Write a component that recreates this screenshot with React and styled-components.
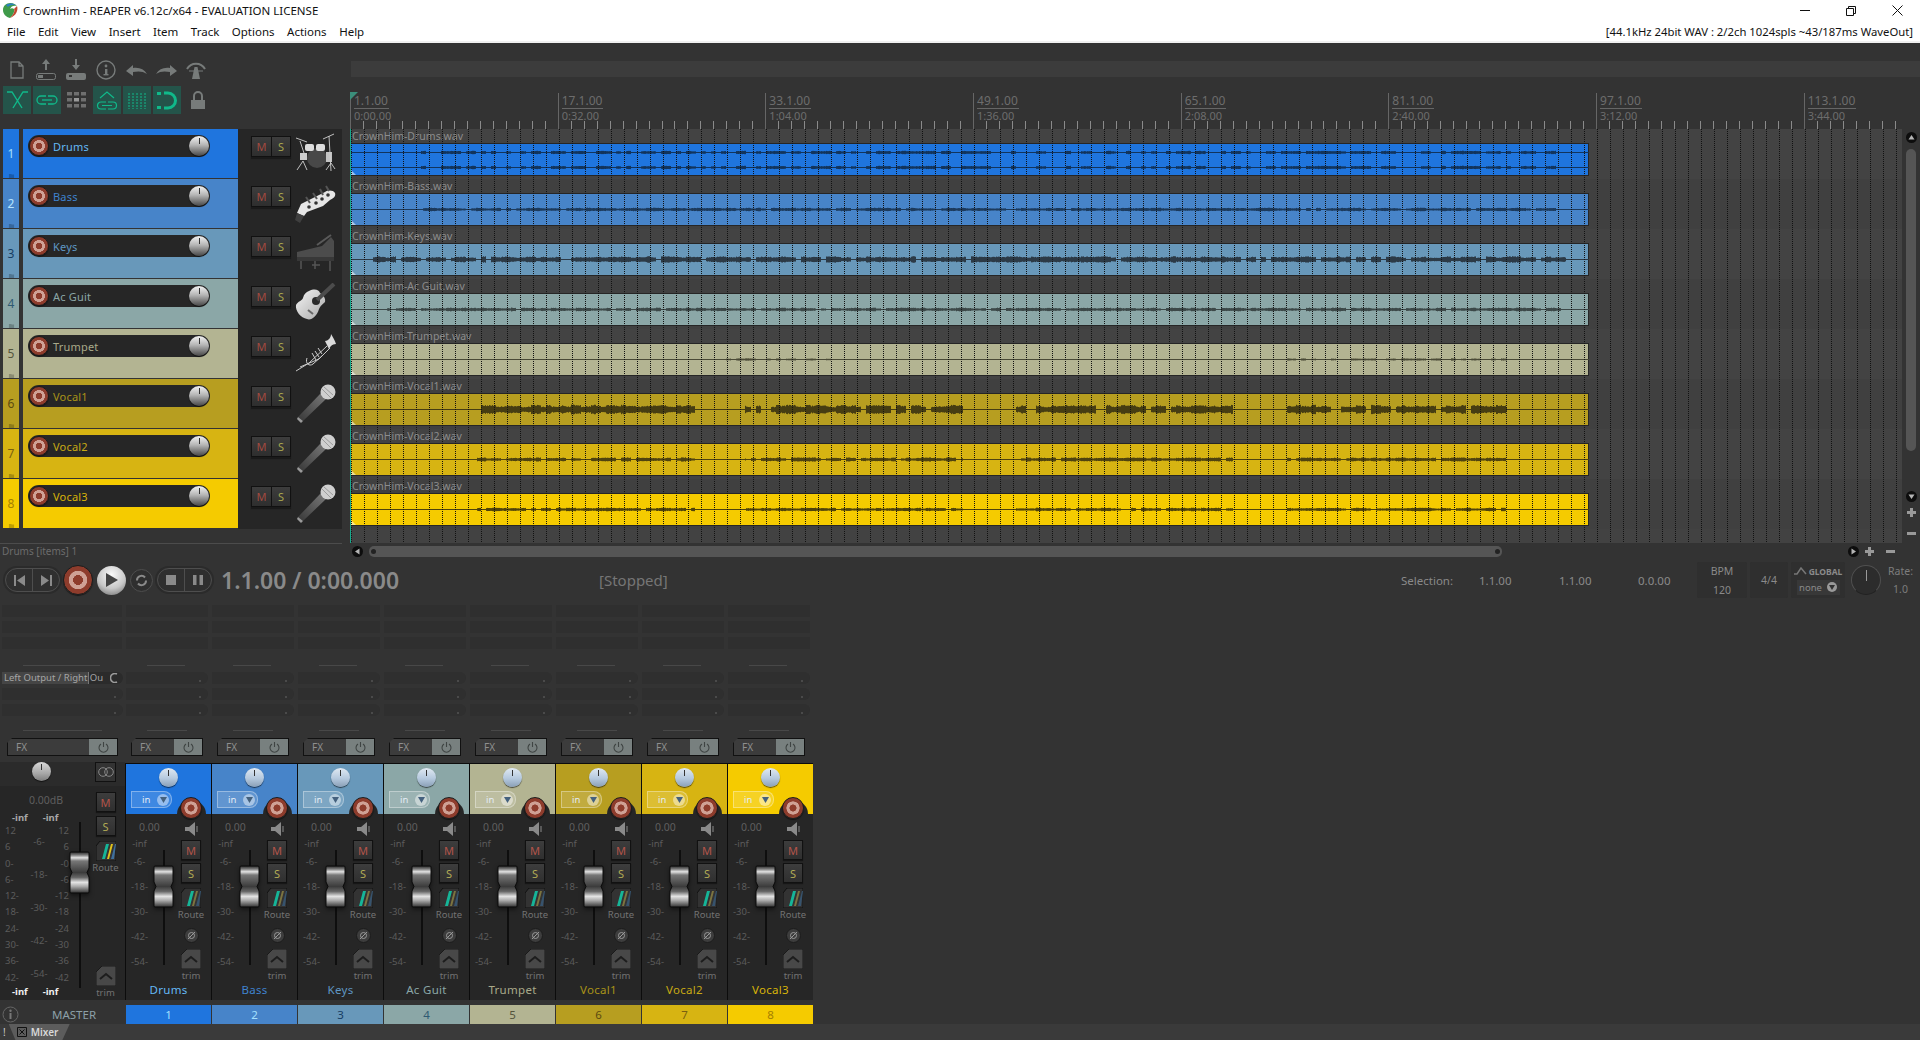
import React from 'react';
import styled, { createGlobalStyle } from 'styled-components';

const GlobalStyle = createGlobalStyle`
  html, body { margin: 0; padding: 0; background: #333; }
  body { font-family: "Noto Sans", "Open Sans", sans-serif; overflow: hidden; }
  * { box-sizing: border-box; }
`;

const STEP = 12.98;
const VOCAL_SEGS = [[126, 344], [394, 612], [665, 882], [936, 1156]];

const TRACKS = [
  { n: 1, name: 'Drums', color: '#1f75de', label: '#64b9f5', num: '#a5e0ff', wave: '#12345c', amp: 1.8, sparse: true, stereo: true, from: 70, to: 1205, icon: 'drums' },
  { n: 2, name: 'Bass', color: '#4784c9', label: '#3f83cf', num: '#b5e3ff', wave: '#1c3a5c', amp: 1.9, from: 72, to: 1205, icon: 'bass' },
  { n: 3, name: 'Keys', color: '#6898ba', label: '#5f97c4', num: '#173d63', wave: '#2c3a46', amp: 3.4, from: 22, to: 1215, icon: 'piano' },
  { n: 4, name: 'Ac Guit', color: '#8ba7a7', label: '#8ba7a7', num: '#2f5a72', wave: '#3c4848', amp: 2, from: 36, to: 1210, icon: 'guitar' },
  { n: 5, name: 'Trumpet', color: '#b3b492', label: '#a9aa8a', num: '#55553c', wave: '#4a4a36', amp: 1.2, sparse: true, segs: [[366, 480], [936, 1156]], icon: 'trumpet' },
  { n: 6, name: 'Vocal1', color: '#b79e20', label: '#a89318', num: '#5c4a10', wave: '#463d12', amp: 5, segs: VOCAL_SEGS, icon: 'mic' },
  { n: 7, name: 'Vocal2', color: '#d7b412', label: '#c8aa14', num: '#7a5f10', wave: '#4f430f', amp: 2.2, segs: VOCAL_SEGS, icon: 'mic' },
  { n: 8, name: 'Vocal3', color: '#f5cb00', label: '#d8b408', num: '#a57f00', wave: '#4f430a', amp: 1.9, segs: VOCAL_SEGS, icon: 'mic' },
];

const MENUS = ['File', 'Edit', 'View', 'Insert', 'Item', 'Track', 'Options', 'Actions', 'Help'];
const RULER = [
  ['1.1.00', '0:00.00'], ['17.1.00', '0:32.00'], ['33.1.00', '1:04.00'], ['49.1.00', '1:36.00'],
  ['65.1.00', '2:08.00'], ['81.1.00', '2:40.00'], ['97.1.00', '3:12.00'], ['113.1.00', '3:44.00'],
];

// pseudo random so the wave form stays the same on each render
const noise = (i, seed) => {
  const s = Math.sin(i * 12.9898 + seed * 78.233) * 43758.5453;
  return s - Math.floor(s);
};

const wavePath = (t, center) => {
  const segs = t.segs || [[t.from, t.to]];
  let d = '';
  segs.forEach(([a, b]) => {
    for (let x = a; x < b; x++) {
      const burst = noise(Math.floor(x / 5), t.n);
      const fine = noise(x, t.n + 3);
      const gate = t.sparse ? burst > 0.45 : burst > 0.1;
      const h = gate ? t.amp * (0.5 + 0.5 * burst) * (0.75 + 0.25 * fine) : 0.5;
      d += `M${x + 0.5} ${(center - h).toFixed(1)}V${(center + h).toFixed(1)}`;
    }
  });
  return d;
};

const Page = styled.div`
  width: 1920px;
  height: 1040px;
  display: flex;
  flex-direction: column;
  background: #333;
  overflow: hidden;
`;

const TitleBar = styled.div`
  height: 21px;
  background: #fff;
  display: flex;
  align-items: center;
  padding-left: 2px;
  font-size: 11.5px;
  color: #111;
`;
const TitleText = styled.span`
  margin-left: 4px;
  flex: 1;
`;
const WinButtons = styled.div`
  display: flex;
  align-items: center;
  height: 21px;
`;
const WinButton = styled.span`
  width: 46px;
  height: 21px;
  display: flex;
  align-items: center;
  justify-content: center;
`;
const MenuBar = styled.div`
  height: 22px;
  background: #fff;
  border-bottom: 2px solid #f0f0f0;
  display: flex;
  align-items: center;
  padding: 0 7px;
  font-size: 11.5px;
  color: #111;
  gap: 12.5px;
`;
const AudioInfo = styled.span`
  margin-left: auto;
  font-size: 11.3px;
`;

const Upper = styled.div`
  display: flex;
  height: 517px;
`;
const LeftCol = styled.div`
  width: 350px;
  flex: none;
`;
const Toolbar = styled.div`
  height: 86px;
  padding: 13px 0 0 3px;
`;
const ToolRow = styled.div`
  display: flex;
  align-items: center;
  height: 28px;
  margin-bottom: ${p => p.$mb || 0}px;
`;
const ToolCell = styled.span`
  width: ${p => p.$w || 30}px;
  height: 28px;
  flex: none;
  display: flex;
  align-items: center;
  justify-content: center;
`;
const ToggleCell = styled(ToolCell)`
  background: ${p => (p.$on ? '#24544a' : 'transparent')};
  width: 28px;
  margin-right: 2px;
`;

const TcpRow = styled.div`
  display: flex;
  height: 50px;
  padding-left: 3px;
`;
const TrackNum = styled.div`
  width: 16px;
  height: 49px;
  margin-right: 4px;
  background: ${p => p.$color};
  color: ${p => p.$text};
  font-size: 12px;
  display: flex;
  flex-direction: column;
  align-items: center;
  padding-top: 16px;
`;
const TrackPanel = styled.div`
  width: 215px;
  height: 49px;
  background: ${p => p.$color};
  padding: 6px 0 0 5px;
`;
const TrackPill = styled.div`
  width: 182px;
  height: 22px;
  border-radius: 11px;
  background: #262626;
  display: flex;
  align-items: center;
  padding: 0 1px;
`;
const TrackName = styled.span`
  color: ${p => p.$color};
  font-size: 11px;
  letter-spacing: 0.2px;
  margin-left: 4px;
  flex: 1;
`;
const RecButton = styled.span`
  display: block;
  flex: none;
  width: ${p => p.$size || 20}px;
  height: ${p => p.$size || 20}px;
  border-radius: 50%;
  border: 1px solid #1c1c1c;
  background: radial-gradient(circle, #8e3c2c 0 24%, #cfa195 26% 45%, #8e3c2c 48% 100%);
  box-shadow: 0 1px 1px rgba(0, 0, 0, 0.5);
`;
const Knob = styled.span`
  display: block;
  flex: none;
  position: relative;
  width: ${p => p.$size || 20}px;
  height: ${p => p.$size || 20}px;
  border-radius: 50%;
  background: ${p => p.$bg || 'linear-gradient(#f2f2f2, #b5b5b5 45%, #484848)'};
  box-shadow: 0 1px 1px rgba(0, 0, 0, 0.6);
  &::after {
    content: '';
    position: absolute;
    left: 50%;
    top: 2px;
    width: 1px;
    height: 6px;
    margin-left: -0.5px;
    background: #333;
  }
`;
const TcpRight = styled.div`
  width: 104px;
  background: #262626;
  display: flex;
  align-items: flex-start;
  padding: 7px 0 0 13px;
`;
const MsGroup = styled.div`
  display: flex;
  border: 1px solid #111;
  box-shadow: 0 2px 1px rgba(0, 0, 0, 0.3);
  margin-right: 4px;
  flex: none;
`;
const MsButton = styled.span`
  width: 19px;
  height: 19px;
  background: linear-gradient(#3d3d3d, #2e2e2e);
  border-left: ${p => (p.$s ? '1px solid #111' : 'none')};
  color: ${p => (p.$s ? '#a8a64e' : '#a24a40')};
  font-size: 11px;
  display: flex;
  align-items: center;
  justify-content: center;
`;
const InstrumentBox = styled.span`
  width: 42px;
  height: 40px;
  margin-top: -3px;
  flex: none;
`;
const StatusLine = styled.div`
  width: 342px;
  height: 15px;
  margin-top: 14px;
  border-top: 1px solid #4c4c4c;
  font-size: 10px;
  line-height: 14px;
  color: #6c6c6c;
  padding-left: 2px;
`;

const RightCol = styled.div`
  width: 1570px;
  display: flex;
  flex-direction: column;
  padding-top: 18px;
`;
const MarkerStrip = styled.div`
  height: 16px;
  margin-left: 1px;
  width: 1569px;
  background: #3c3c3c;
`;
const Ruler = styled.div`
  height: 39px;
  margin-top: 13px;
  display: flex;
  background: repeating-linear-gradient(to right, #8a8a8a 0 1px, transparent 1px ${STEP}px) left bottom / 100% 8px no-repeat;
  overflow: hidden;
  width: 1552px;
`;
const RulerCell = styled.div`
  width: ${STEP * 16}px;
  flex: none;
  height: 36px;
  margin-top: 3px;
  border-left: 1px solid #666;
  padding: 1px 0 0 3px;
  color: #6d6d6d;
`;
const RulerBar = styled.div`
  width: fit-content;
  font-size: 12px;
  line-height: 14px;
  padding-right: 1px;
  border-bottom: 1px solid #666;
`;
const RulerTime = styled.div`
  font-size: 11px;
  line-height: 13px;
`;
const ArrangeRow = styled.div`
  display: flex;
  height: 414px;
`;
const Arrange = styled.div`
  position: relative;
  width: 1552px;
  height: 414px;
  background: #424242;
  border-left: 1px solid #17a88c;
  overflow: hidden;
`;
const Lane = styled.div`
  height: 50px;
  padding-top: 14px;
  position: relative;
  background: ${p => (p.$alt ? '#404040' : '#434343')};
`;
const ItemLabel = styled.span`
  position: absolute;
  left: 1px;
  top: 1px;
  font-size: 10.5px;
  line-height: 12px;
  color: #8c8c8c;
`;
const Item = styled.div`
  width: 1238px;
  height: 33px;
  position: relative;
  background: ${p => p.$color};
  border: 1px solid #262626;
  border-left: none;
  &::after {
    content: '';
    position: absolute;
    left: 0;
    bottom: 0;
    border-left: 5px solid rgba(255, 255, 255, 0.55);
    border-top: 5px solid transparent;
  }
`;
const WaveSvg = styled.svg`
  display: block;
`;
const GridSvg = styled.svg`
  position: absolute;
  left: 0;
  top: 0;
  pointer-events: none;
`;
const PlayFlag = styled.span`
  position: absolute;
  left: 350px;
  top: 92px;
  border-top: 8px solid #3b8f7b;
  border-right: 8px solid transparent;
`;
const VScroll = styled.div`
  width: 18px;
  display: flex;
  flex-direction: column;
  align-items: center;
  padding-top: 3px;
`;
const RoundArrow = styled.span`
  width: 11px;
  height: 11px;
  flex: none;
  border-radius: 50%;
  background: #0d0d0d;
  display: flex;
  align-items: center;
  justify-content: center;
`;
const VThumb = styled.div`
  width: 10px;
  height: 302px;
  flex: none;
  margin: 6px 0 40px;
  background: #555;
  border-radius: 5px;
`;
const PlusMinus = styled.svg`
  display: block;
  flex: none;
  margin-top: ${p => p.$mt || 0}px;
  margin-left: ${p => p.$ml || 0}px;
`;
const HScroll = styled.div`
  height: 17px;
  display: flex;
  align-items: center;
  padding-left: 2px;
`;
const HThumb = styled.div`
  width: 1133px;
  height: 11px;
  flex: none;
  margin: 0 346px 0 6px;
  background: #555;
  border-radius: 5px;
  position: relative;
  &::before, &::after {
    content: '';
    position: absolute;
    top: 3px;
    width: 5px;
    height: 5px;
    border-radius: 50%;
    background: #222;
  }
  &::before { left: 2px; }
  &::after { right: 2px; }
`;

const Transport = styled.div`
  height: 40px;
  display: flex;
  align-items: center;
  padding-left: 5px;
  color: #7d7d7d;
`;
const PillGroup = styled.div`
  width: 55px;
  height: 24px;
  flex: none;
  border: 1px solid #4e4e4e;
  border-radius: 12px;
  background: #2f2f2f;
  display: flex;
  box-shadow: 0 0 0 2px #2b2b2b;
`;
const PillPart = styled.span`
  flex: 1;
  display: flex;
  align-items: center;
  justify-content: center;
  border-left: ${p => (p.$line ? '1px solid #4e4e4e' : 'none')};
`;
const BigRec = styled(RecButton)`
  margin: 0 4px 0 3px;
`;
const PlayBall = styled.span`
  width: 29px;
  height: 29px;
  flex: none;
  border-radius: 50%;
  background: radial-gradient(circle at 50% 30%, #fafafa, #c8c8c8 55%, #666);
  display: flex;
  align-items: center;
  justify-content: center;
  margin-right: 4px;
`;
const LoopBall = styled.span`
  width: 23px;
  height: 23px;
  flex: none;
  margin-right: 4px;
  border-radius: 50%;
  border: 1px solid #4e4e4e;
  background: #2f2f2f;
  display: flex;
  align-items: center;
  justify-content: center;
`;
const TimeText = styled.span`
  width: 378px;
  margin-left: 9px;
  font-size: 23px;
  font-weight: 600;
  color: #8a8a8a;
  flex: none;
`;
const StoppedText = styled.span`
  width: 802px;
  font-size: 15px;
  color: #767676;
  flex: none;
`;
const SelCell = styled.span`
  width: ${p => p.$w}px;
  font-size: 11.5px;
  color: #8a8a8a;
  flex: none;
`;
const InfoBox = styled.div`
  width: ${p => p.$w}px;
  height: 36px;
  flex: none;
  margin-right: 3px;
  background: #2f2f2f;
  border-radius: 2px;
  display: flex;
  flex-direction: column;
  align-items: center;
  justify-content: center;
  font-size: 10.5px;
  gap: ${p => p.$gap || 0}px;
  color: #8a8a8a;
`;
const GlobalLine = styled.span`
  font-size: 8.5px;
  font-weight: 700;
  display: flex;
  align-items: center;
  gap: 2px;
`;
const NoneLine = styled.span`
  background: #383838;
  font-size: 9.5px;
  width: 43px;
  height: 15px;
  display: flex;
  align-items: center;
  justify-content: space-around;
`;
const RateKnob = styled.span`
  width: 30px;
  height: 30px;
  flex: none;
  margin: 0 7px 0 3px;
  border-radius: 50%;
  border: 1px solid #505050;
  border-bottom-color: #222;
  background: #2c2c2c;
  position: relative;
  &::after {
    content: '';
    position: absolute;
    left: 14px;
    top: 4px;
    width: 1px;
    height: 11px;
    background: #999;
  }
`;
const RateBox = styled.div`
  display: flex;
  flex-direction: column;
  align-items: center;
  gap: 4px;
  font-size: 10.5px;
  color: #7d7d7d;
`;

const Mixer = styled.div`
  display: flex;
  height: 424px;
`;
const MixerCol = styled.div`
  width: ${p => p.$w}px;
  flex: none;
  display: flex;
  flex-direction: column;
  padding-top: 5px;
`;
const Slots = styled.div`
  height: 44px;
  display: flex;
  flex-direction: column;
  gap: 4px;
  margin-left: ${p => p.$ml}px;
  width: ${p => p.$w}px;
`;
const Slot = styled.div`
  height: 12px;
  background: #2f2f2f;
  border-radius: ${p => (p.$round ? '0 6px 6px 0' : '0')};
  position: relative;
  &::after {
    content: ${p => (p.$round ? "''" : 'none')};
    position: absolute;
    right: 7px;
    top: 8px;
    width: 2px;
    height: 2px;
    background: #4a4a4a;
  }
`;
const OutputSlot = styled.div`
  height: 12px;
  background: #2b2b2b;
  border-radius: 0 6px 6px 0;
  display: flex;
  align-items: center;
  font-size: 9.5px;
  color: #a5a5a5;
  white-space: nowrap;
`;
const OutputHi = styled.span`
  background: #454545;
  height: 12px;
  line-height: 12px;
  width: 87px;
  padding-left: 2px;
  overflow: visible;
  flex: none;
  border-right: 1px solid #777;
`;
const OutputRing = styled.svg`
  margin-left: 21px;
  flex: none;
`;
const Divider = styled.div`
  height: 1px;
  background: #484848;
  margin: ${p => p.$mt}px 0 ${p => p.$mb}px ${p => p.$ml}px;
  width: ${p => p.$w}px;
`;
const FxBar = styled.div`
  height: 18px;
  margin-left: ${p => p.$ml}px;
  width: ${p => p.$w}px;
  display: flex;
  border: 1px solid #111;
  background: #3c3c3c;
  font-size: 10px;
  color: #8f8f8f;
  clip-path: polygon(5px 0, 100% 0, 100% 100%, 0 100%, 0 5px);
`;
const FxLabel = styled.span`
  flex: 1;
  padding-left: 8px;
  line-height: 16px;
`;
const FxPower = styled.span`
  width: 28px;
  background: #78807f;
  display: flex;
  align-items: center;
  justify-content: center;
`;
const StripHead = styled.div`
  height: 51px;
  margin-top: 7px;
  background: ${p => p.$color};
  border-left: 1px solid #0c0c0c;
  border-top: 1px solid #0c0c0c;
  position: relative;
  padding: 4px 0 0 0;
`;
const HeadKnobRow = styled.div`
  display: flex;
  justify-content: center;
`;
const InPill = styled.div`
  width: 41px;
  height: 17px;
  margin: 4px 0 0 5px;
  border: 1px solid rgba(255, 255, 255, 0.35);
  border-radius: 0 8px 8px 0;
  background: rgba(255, 255, 255, 0.14);
  display: flex;
  align-items: center;
  justify-content: space-between;
  padding: 0 2px 0 10px;
  font-size: 9.5px;
  color: #e4edf5;
`;
const InArrow = styled.span`
  width: 12px;
  height: 12px;
  border-radius: 50%;
  background: rgba(255, 255, 255, 0.45);
  display: flex;
  align-items: center;
  justify-content: center;
`;
const RecHole = styled.span`
  position: absolute;
  left: 51px;
  top: 37px;
  width: 29px;
  height: 13px;
  border-radius: 14px 14px 0 0;
  background: #262626;
`;
const HeadRec = styled(RecButton)`
  position: absolute;
  left: 54px;
  top: 33px;
  z-index: 1;
`;
const StripBody = styled.div`
  height: 186px;
  background: #262626;
  border-left: 1px solid #0c0c0c;
  display: flex;
  flex-direction: column;
`;
const BodyMain = styled.div`
  display: flex;
  height: 166px;
  flex: none;
`;
const BodyLeft = styled.div`
  width: 55px;
  flex: none;
  padding-top: 6px;
`;
const GainValue = styled.div`
  height: 14px;
  margin-left: 13px;
  font-size: 10.5px;
  line-height: 14px;
  color: #5f5f5f;
`;
const FaderArea = styled.div`
  display: flex;
  margin-top: 4px;
`;
const ScaleCol = styled.div`
  width: 27px;
  flex: none;
  display: flex;
  flex-direction: column;
  align-items: center;
`;
const ScaleMark = styled.span`
  height: 12px;
  line-height: 12px;
  font-size: 9.5px;
  color: #5c5c5c;
  margin-top: ${p => p.$mt}px;
`;
const FaderCol = styled.div`
  width: 21px;
  flex: none;
  position: relative;
  height: ${p => p.$h}px;
`;
const FaderTrack = styled.div`
  width: 2px;
  height: ${p => p.$h}px;
  margin: ${p => p.$top}px 0 0 10px;
  background: #0e0e0e;
`;
const FaderThumb = styled.svg`
  position: absolute;
  left: 0;
  top: ${p => p.$top}px;
  filter: drop-shadow(0 2px 2px rgba(0, 0, 0, 0.5));
`;
const BodyRight = styled.div`
  width: ${p => p.$w || 20}px;
  flex: none;
  display: flex;
  flex-direction: column;
  align-items: center;
  padding-top: ${p => p.$pt || 8}px;
  margin-left: ${p => p.$ml || 0}px;
`;
const SquareBtn = styled.span`
  width: 20px;
  height: 20px;
  flex: none;
  margin-top: ${p => p.$mt}px;
  border: 1px solid #111;
  background: linear-gradient(#3d3d3d, #2f2f2f);
  box-shadow: 0 1px 1px rgba(0, 0, 0, 0.4);
  font-size: 11px;
  color: ${p => p.$color};
  display: flex;
  align-items: center;
  justify-content: center;
`;
const MiniLabel = styled.span`
  height: 13px;
  line-height: 13px;
  font-size: 9.5px;
  color: #737373;
  flex: none;
`;
const PhaseBtn = styled.span`
  width: 15px;
  height: 15px;
  margin-top: 7px;
  flex: none;
  border-radius: 50%;
  background: #3d3d3d;
  border: 1px solid #1c1c1c;
  display: flex;
  align-items: center;
  justify-content: center;
`;
const IconSpace = styled.svg`
  display: block;
  flex: none;
  margin-top: ${p => p.$mt || 0}px;
`;
const StripName = styled.div`
  height: 20px;
  text-align: center;
  font-size: 11.5px;
  line-height: 20px;
  letter-spacing: 0.3px;
  color: ${p => p.$color};
`;
const NumberCell = styled.div`
  height: 19px;
  margin-top: 5px;
  margin-left: 1px;
  background: ${p => p.$color};
  color: ${p => p.$text};
  text-align: center;
  font-size: 11.5px;
  line-height: 19px;
`;
const MasterHead = styled.div`
  height: 24px;
  margin-top: 6px;
  background: #2b2b2b;
  display: flex;
  align-items: flex-start;
  padding-left: 32px;
`;
const StereoBtn = styled.span`
  width: 21px;
  height: 20px;
  margin-left: 44px;
  border: 1px solid #111;
  background: #333;
  display: flex;
  align-items: center;
  justify-content: center;
`;
const MasterBody = styled.div`
  height: 214px;
  background: #262626;
  display: flex;
`;
const MeterCol = styled.div`
  width: 69px;
  flex: none;
  padding-top: 7px;
`;
const DbValue = styled.div`
  height: 14px;
  font-size: 10.5px;
  line-height: 14px;
  color: #5f5f5f;
  margin-left: 29px;
`;
const InfRow = styled.div`
  display: flex;
  gap: 15px;
  padding-left: 12px;
  margin-top: ${p => p.$mt}px;
  height: 13px;
  line-height: 13px;
  font-size: 9.5px;
  font-weight: 700;
  color: ${p => p.$color};
`;
const MeterGrid = styled.div`
  display: grid;
  grid-template-columns: 22px 24px 18px;
  margin: 1px 0 0 5px;
  height: 160px;
  overflow: hidden;
`;
const MeterScale = styled.div`
  display: flex;
  flex-direction: column;
  align-items: ${p => p.$align};
  padding-top: ${p => p.$pt}px;
`;
const MeterMark = styled.span`
  height: ${p => p.$h}px;
  flex: none;
  line-height: 12px;
  font-size: 9.5px;
  color: #5c5c5c;
`;
const MasterName = styled.div`
  height: 19px;
  margin-top: 5px;
  display: flex;
  align-items: center;
  padding-left: 2px;
  font-size: 11.5px;
  color: #8ca0a8;
`;
const MasterText = styled.span`
  margin-left: 33px;
`;
const TabBar = styled.div`
  height: 16px;
  background: #3a3a3a;
  display: flex;
  align-items: center;
  font-size: 10px;
  color: #ccc;
  padding-left: 3px;
`;
const MixerTab = styled.div`
  width: 61px;
  height: 16px;
  margin-left: 3px;
  background: #5c5c5c;
  clip-path: polygon(0 0, 100% 0, 88% 100%, 11% 100%);
  display: flex;
  align-items: center;
  gap: 4px;
  padding-left: 8px;
  font-weight: 600;
  font-size: 10px;
  color: #d8d8d8;
`;

function FolderIcon({ c }) {
  return (
    <svg width="9" height="7" viewBox="0 0 9 7" style={{ marginTop: 12 }}>
      <path d="M0 0h4l1 1h4v6H0z" fill={c} />
    </svg>
  );
}

function MicIcon() {
  return (
    <svg width="42" height="40" viewBox="0 0 42 40">
      <defs>
        <linearGradient id="mh" x1="0" y1="1" x2="1" y2="0">
          <stop offset="0" stopColor="#383838" />
          <stop offset="1" stopColor="#7a7a7a" />
        </linearGradient>
      </defs>
      <path d="M26 10L31 16L8 38L3 34z" fill="url(#mh)" />
      <path d="M3 34L8 38L6 40L2 36z" fill="#9a9a9a" />
      <circle cx="33" cy="9" r="7.5" fill="#cfcfcf" />
      <path d="M27 6L36 15M29 4L38 12" stroke="#9c9c9c" strokeWidth="1" />
    </svg>
  );
}

function DrumsIcon() {
  return (
    <svg width="42" height="40" viewBox="0 0 42 40">
      <circle cx="22" cy="25" r="10" fill="#484848" />
      <rect x="10" y="11" width="9" height="7" rx="2" fill="#dedede" />
      <rect x="21" y="11" width="9" height="7" rx="2" fill="#dedede" />
      <rect x="5" y="20" width="7" height="7" fill="#cfcfcf" />
      <rect x="31" y="19" width="6" height="10" fill="#c4c4c4" />
      <path d="M1 5L12 9M28 6L39 1M34 3L36 38M5 8L9 20M8 28L2 37M8 28L12 37M36 30L31 37M36 30L40 36" stroke="#cfcfcf" strokeWidth="0.9" fill="none" />
    </svg>
  );
}

function BassIcon() {
  return (
    <svg width="42" height="40" viewBox="0 0 42 40">
      <path d="M2 30L6 21L30 9C33 7 38 7 40 10C41 13 39 15 35 17L28 23L12 29L9 33z" fill="#e6e6e6" />
      <path d="M2 30L9 33L5 40L0 37z" fill="#3f3f3f" />
      <circle cx="14" cy="24" r="1.8" fill="#333" />
      <circle cx="21" cy="20" r="1.8" fill="#333" />
      <circle cx="27" cy="16" r="1.8" fill="#333" />
      <circle cx="33" cy="12" r="1.8" fill="#333" />
      <path d="M15 20L11 14M22 16L18 10M28 12L25 6M34 8L31 3" stroke="#555" strokeWidth="2" />
    </svg>
  );
}

function PianoIcon() {
  return (
    <svg width="42" height="40" viewBox="0 0 42 40">
      <path d="M2 19L27 13L36 4L39 8L39 24L2 24z" fill="#4c4c4c" />
      <path d="M22 12L36 2" stroke="#5a5a5a" strokeWidth="2" />
      <path d="M2 24H39V28H2z" fill="#383838" />
      <path d="M6 28V36M20 28V36M35 28V38M17 32H25" stroke="#555" strokeWidth="1.5" />
    </svg>
  );
}

function GuitarIcon() {
  return (
    <svg width="42" height="40" viewBox="0 0 42 40">
      <defs>
        <linearGradient id="gb" x1="0" y1="0" x2="1" y2="1">
          <stop offset="0" stopColor="#f5f5f5" />
          <stop offset="1" stopColor="#a8a8a8" />
        </linearGradient>
      </defs>
      <path d="M14 8C20 5 24 7 25 10C28 12 31 15 30 19C27 22 26 22 24 26C22 33 16 38 12 36C6 35 0 28 1 22C3 18 7 18 8 15C9 11 11 9 14 8z" fill="url(#gb)" />
      <circle cx="21" cy="18" r="4" fill="#2a2a2a" />
      <path d="M22 17L39 1" stroke="#4c4c4c" strokeWidth="4" />
      <path d="M13 27L18 31" stroke="#666" strokeWidth="2" />
    </svg>
  );
}

function TrumpetIcon() {
  return (
    <svg width="42" height="40" viewBox="0 0 42 40">
      <path d="M1 38L14 30L32 13M5 34L24 26L35 15" stroke="#c8c8c8" strokeWidth="1" fill="none" />
      <path d="M30 8C33 8 36 5 36 1C38 4 40 8 41 11C37 11 35 14 34 16z" fill="#dadada" />
      <path d="M12 25C10 30 14 34 18 31L28 22M17 20L21 27M20 18L24 24M23 15L27 21" stroke="#cfcfcf" strokeWidth="1" fill="none" />
    </svg>
  );
}

const ICONS = { mic: MicIcon, drums: DrumsIcon, bass: BassIcon, piano: PianoIcon, guitar: GuitarIcon, trumpet: TrumpetIcon };

function ToolIcon({ kind }) {
  const g = '#777b7a';
  const t = '#10b98a';
  const paths = {
    doc: <path d="M1 1H9L13 5V17H1z M9 1V5H13" fill="none" stroke={g} strokeWidth="1.3" />,
    open: (
      <g>
        <path d="M10 0L14 5H11V11H9V5H6z" fill={g} />
        <rect x="0.5" y="14.5" width="19" height="6" rx="2" fill="none" stroke={g} />
        <rect x="2" y="16" width="5" height="3" fill={g} />
      </g>
    ),
    save: (
      <g>
        <path d="M10 11L14 6H11V0H9V6H6z" fill={g} />
        <rect x="0" y="14" width="20" height="7" rx="2" fill={g} />
        <rect x="3" y="16" width="3" height="2" fill="#333" />
      </g>
    ),
    info: (
      <g>
        <circle cx="10" cy="10" r="9" fill="none" stroke={g} strokeWidth="1.4" />
        <rect x="9" y="9" width="2.4" height="6" fill={g} />
        <rect x="7.5" y="14" width="5" height="1.4" fill={g} />
        <circle cx="10" cy="6" r="1.4" fill={g} />
      </g>
    ),
    undo: <path d="M0 8L7 2V5C13 4 18 6 21 11C17 8 12 8 7 9V13z" fill={g} />,
    redo: <path d="M21 8L14 2V5C8 4 3 6 0 11C4 8 9 8 14 9V13z" fill={g} />,
    road: (
      <g>
        <path d="M1 9C5 2 15 2 19 9" fill="none" stroke={g} strokeWidth="2" />
        <path d="M6 19L8.5 7H11.5L14 19z" fill={g} />
        <path d="M3 11H17" stroke={g} />
      </g>
    ),
    xfade: <path d="M1 4H6L16 20M22 4H17L7 20" fill="none" stroke={t} strokeWidth="1.4" />,
    link: (
      <g fill="none" stroke={t} strokeWidth="1.3">
        <path d="M11 8H6A4 4 0 0 0 6 16H11" />
        <path d="M13 8H18A4 4 0 0 1 18 16H13" />
        <path d="M7 12H17" />
      </g>
    ),
    grid: (
      <g>
        {[0, 1, 2].map(r => [0, 1, 2].map(c => <rect key={`${r}${c}`} x={c * 7} y={r * 6 + 3} width="5" height="3.5" fill={r === 1 && c === 1 ? '#999' : '#6f6f6f'} />))}
      </g>
    ),
    env: (
      <g fill="none" stroke={t} strokeWidth="1.2">
        <path d="M4 9L11 3L18 9" />
        <path d="M10 13H5A3.5 3.5 0 0 0 5 20H10M12 13H17A3.5 3.5 0 0 1 17 20H12M6 16.5H16" />
      </g>
    ),
    snap: <path d="M5 4V20M9 4V20M13 4V20M17 4V20M21 4V20" fill="none" stroke={t} strokeWidth="1" strokeDasharray="2 1" />,
    loop: (
      <g>
        <path d="M9 4H13A7.5 7.5 0 0 1 13 19H9" fill="none" stroke={t} strokeWidth="3" />
        <rect x="2" y="3" width="4" height="3" fill={t} />
        <rect x="2" y="17" width="4" height="3" fill={t} />
      </g>
    ),
    lock: (
      <g>
        <path d="M4 10V6A4 4 0 0 1 12 6V10" fill="none" stroke={g} strokeWidth="2" />
        <rect x="1" y="10" width="14" height="9" fill={g} />
      </g>
    ),
  };
  const size = { doc: [14, 18], open: [20, 22], save: [20, 22], info: [20, 20], undo: [21, 14], redo: [21, 14], road: [20, 20], xfade: [23, 24], link: [24, 24], grid: [20, 22], env: [22, 22], snap: [26, 22], loop: [24, 23], lock: [16, 20] }[kind];
  return <svg width={size[0]} height={size[1]} viewBox={`0 0 ${size[0]} ${size[1]}`}>{paths[kind]}</svg>;
}

function RouteIcon({ master }) {
  return (
    <IconSpace width="20" height="20" viewBox="0 0 20 20" $mt={5}>
      <path d="M4 0H20V20H0V5z" fill="#333" stroke="#111" />
      <path d="M6 18L10 3H13L9 18z" fill="#16b598" />
      <path d="M11 18L15 3H17L13 18z" fill={master ? '#e0c21c' : '#7c7440'} />
      <path d="M15 18L19 3H20L18 18z" fill={master ? '#3f6f9c' : '#37536d'} />
    </IconSpace>
  );
}

function TrimIcon({ mt }) {
  return (
    <IconSpace width="20" height="20" viewBox="0 0 20 20" $mt={mt}>
      <path d="M6 0H20V20H0V6z" fill="#484848" stroke="#1a1a1a" />
      <path d="M4 13L10 8L16 13" fill="none" stroke="#1d1d1d" strokeWidth="2" />
    </IconSpace>
  );
}

function Fader({ h, track, trackTop, thumb }) {
  return (
    <FaderCol $h={h}>
      <FaderTrack $h={track} $top={trackTop} />
      <FaderThumb $top={thumb} width="21" height="43" viewBox="0 0 21 43">
        <defs>
          <linearGradient id={`ft${thumb}`} x1="0" y1="0" x2="0" y2="1">
            <stop offset="0" stopColor="#2a2a2a" />
            <stop offset="0.07" stopColor="#777" />
            <stop offset="0.14" stopColor="#e2e2e2" />
            <stop offset="0.22" stopColor="#777" />
            <stop offset="0.38" stopColor="#555" />
            <stop offset="0.5" stopColor="#3c3c3c" />
            <stop offset="0.62" stopColor="#666" />
            <stop offset="0.74" stopColor="#e4e4e4" />
            <stop offset="0.84" stopColor="#aaa" />
            <stop offset="1" stopColor="#333" />
          </linearGradient>
        </defs>
        <path d="M1 2Q1 1 2 1H19Q20 1 20 2V17L18 21.5L20 26V41Q20 42 19 42H2Q1 42 1 41V26L3 21.5L1 17z" fill={`url(#ft${thumb})`} stroke="#0a0a0a" />
      </FaderThumb>
    </FaderCol>
  );
}

function SlotGroup({ ml, w, round, children }) {
  return (
    <Slots $ml={ml} $w={w}>
      {children || [0, 1, 2].map(i => <Slot key={i} $round={round} />)}
    </Slots>
  );
}

function PowerIcon() {
  return (
    <svg width="11" height="12" viewBox="0 0 11 12">
      <path d="M3 3A4.5 4.5 0 1 0 8 3M5.5 1V6" fill="none" stroke="#3f4443" strokeWidth="1.1" />
    </svg>
  );
}

function Strip({ t }) {
  return (
    <MixerCol $w={86}>
      <SlotGroup ml={1} w={82} />
      <Divider $mt={16} $mb={6} $ml={22} $w={38} />
      <SlotGroup ml={1} w={82} round />
      <Divider $mt={14} $mb={7} $ml={22} $w={40} />
      <FxBar $ml={6} $w={72}>
        <FxLabel>FX</FxLabel>
        <FxPower><PowerIcon /></FxPower>
      </FxBar>
      <StripHead $color={t.color}>
        <HeadKnobRow>
          <Knob $size={19} $bg="linear-gradient(#e0e9f2, #b5c9de 55%, #8a9fb6)" />
        </HeadKnobRow>
        <InPill>
          in
          <InArrow>
            <svg width="7" height="6" viewBox="0 0 7 6"><path d="M0 0H7L3.5 6z" fill="#44617e" /></svg>
          </InArrow>
        </InPill>
        <RecHole />
        <HeadRec $size={22} />
      </StripHead>
      <StripBody>
        <BodyMain>
          <BodyLeft>
            <GainValue>0.00</GainValue>
            <FaderArea>
              <ScaleCol>
                <ScaleMark $mt={0}>-inf</ScaleMark>
                <ScaleMark $mt={6}>-6-</ScaleMark>
                <ScaleMark $mt={13}>-18-</ScaleMark>
                <ScaleMark $mt={13}>-30-</ScaleMark>
                <ScaleMark $mt={13}>-42-</ScaleMark>
                <ScaleMark $mt={13}>-54-</ScaleMark>
              </ScaleCol>
              <Fader h={130} track={115} trackTop={12} thumb={27} />
            </FaderArea>
          </BodyLeft>
          <BodyRight>
            <IconSpace width="13" height="14" viewBox="0 0 13 14">
              <path d="M0 5H4L10 0V14L4 9H0z" fill="#8a8a8a" />
              <path d="M12 4V10" stroke="#8a8a8a" />
            </IconSpace>
            <SquareBtn $mt={4} $color="#b3544a">M</SquareBtn>
            <SquareBtn $mt={3} $color="#b3ac55">S</SquareBtn>
            <RouteIcon />
            <MiniLabel>Route</MiniLabel>
            <PhaseBtn>
              <svg width="9" height="9" viewBox="0 0 9 9">
                <circle cx="4.5" cy="4.5" r="3" fill="none" stroke="#999" />
                <path d="M1 8L8 1" stroke="#999" />
              </svg>
            </PhaseBtn>
            <TrimIcon mt={6} />
            <MiniLabel>trim</MiniLabel>
          </BodyRight>
        </BodyMain>
        <StripName $color={t.label}>{t.name}</StripName>
      </StripBody>
      <NumberCell $color={t.color} $text={t.n < 3 ? '#a5e0ff' : t.num}>{t.n}</NumberCell>
    </MixerCol>
  );
}

function MasterStrip() {
  const left = ['12', '6', '0-', '6-', '12-', '18-', '24-', '30-', '36-', '42-'];
  const mid = ['-6-', '-18-', '-30-', '-42-', '-54-'];
  const right = ['12', '6', '-0', '-6', '-12', '-18', '-24', '-30', '-36', '-42'];
  return (
    <MixerCol $w={125}>
      <SlotGroup ml={2} w={120} />
      <Divider $mt={16} $mb={6} $ml={23} $w={77} />
      <SlotGroup ml={2} w={121}>
        <OutputSlot>
          <OutputHi>Left Output / Right Ou</OutputHi>
          <OutputRing width="10" height="10" viewBox="0 0 10 10">
            <path d="M7 1A4.5 4.5 0 1 0 7 9" fill="none" stroke="#9a9a9a" strokeWidth="1.6" />
          </OutputRing>
        </OutputSlot>
        <Slot $round />
        <Slot $round />
      </SlotGroup>
      <Divider $mt={14} $mb={7} $ml={23} $w={79} />
      <FxBar $ml={7} $w={111}>
        <FxLabel>FX</FxLabel>
        <FxPower><PowerIcon /></FxPower>
      </FxBar>
      <MasterHead>
        <Knob $size={19} $bg="linear-gradient(#d8d8d8, #a8a8a8 60%, #7d7d7d)" />
        <StereoBtn>
          <svg width="16" height="10" viewBox="0 0 16 10">
            <circle cx="5" cy="5" r="4.3" fill="none" stroke="#888" />
            <circle cx="11" cy="5" r="4.3" fill="none" stroke="#888" />
          </svg>
        </StereoBtn>
      </MasterHead>
      <MasterBody>
        <MeterCol>
          <DbValue>0.00dB</DbValue>
          <InfRow $mt={4} $color="#a8a8a8"><span>-inf</span><span>-inf</span></InfRow>
          <MeterGrid>
            <MeterScale $align="flex-start" $pt={0}>
              {left.map(m => <MeterMark key={m} $h={16.3}>{m}</MeterMark>)}
            </MeterScale>
            <MeterScale $align="center" $pt={11}>
              {mid.map(m => <MeterMark key={m} $h={33}>{m}</MeterMark>)}
            </MeterScale>
            <MeterScale $align="flex-end" $pt={0}>
              {right.map(m => <MeterMark key={m} $h={16.3}>{m}</MeterMark>)}
            </MeterScale>
          </MeterGrid>
          <InfRow $mt={0} $color="#f0f0f0"><span>-inf</span><span>-inf</span></InfRow>
        </MeterCol>
        <Fader h={200} track={166} trackTop={36} thumb={65} />
        <BodyRight $pt={2} $ml={5} $w={21}>
          <SquareBtn $mt={4} $color="#b3544a">M</SquareBtn>
          <SquareBtn $mt={4} $color="#b3ac55">S</SquareBtn>
          <RouteIcon master />
          <MiniLabel>Route</MiniLabel>
          <TrimIcon mt={92} />
          <MiniLabel>trim</MiniLabel>
        </BodyRight>
      </MasterBody>
      <MasterName>
        <svg width="17" height="17" viewBox="0 0 17 17">
          <circle cx="8.5" cy="8.5" r="7.5" fill="none" stroke="#666" />
          <rect x="7.5" y="7" width="2" height="6" fill="#777" />
          <circle cx="8.5" cy="4.8" r="1.2" fill="#777" />
        </svg>
        <MasterText>MASTER</MasterText>
      </MasterName>
    </MixerCol>
  );
}

function Lanes() {
  const xs = [];
  for (let i = 0; i < 120; i++) xs.push(Math.round(i * STEP) + 0.5);
  return (
    <Arrange>
      {TRACKS.map((t, i) => (
        <Lane key={t.n} $alt={i % 2 === 1}>
          <ItemLabel>CrownHim-{t.name}.wav</ItemLabel>
          <Item $color={t.color}>
            <WaveSvg width="1238" height="31" viewBox="0 0 1238 31">
              {t.stereo ? (
                <>
                  <path d="M0 8.5H1238M0 23.5H1238" stroke={t.wave} />
                  <path d={wavePath(t, 8.5)} stroke={t.wave} />
                  <path d={wavePath(t, 23.5)} stroke={t.wave} />
                </>
              ) : (
                <>
                  <path d="M0 15.5H1238" stroke={t.wave} />
                  <path d={wavePath(t, 15.5)} stroke={t.wave} />
                </>
              )}
            </WaveSvg>
          </Item>
        </Lane>
      ))}
      <GridSvg width="1552" height="414" shapeRendering="crispEdges">
        {xs.map(x => <line key={x} x1={x} x2={x} y1="0" y2="414" stroke="#111" strokeDasharray="1 1" />)}
      </GridSvg>
    </Arrange>
  );
}

function CircleArrow({ dir }) {
  const d = { up: 'M5.5 3L8.5 7.5H2.5z', down: 'M5.5 8L8.5 3.5H2.5z', left: 'M3 5.5L7.5 2.5V8.5z', right: 'M8 5.5L3.5 2.5V8.5z' }[dir];
  return (
    <RoundArrow>
      <svg width="11" height="11" viewBox="0 0 11 11"><path d={d} fill="#b5b5b5" /></svg>
    </RoundArrow>
  );
}

function Plus({ mt, ml }) {
  return <PlusMinus $mt={mt} $ml={ml} width="9" height="9" viewBox="0 0 9 9"><path d="M3 0H6V3H9V6H6V9H3V6H0V3H3z" fill="#999" /></PlusMinus>;
}
function Minus({ mt, ml }) {
  return <PlusMinus $mt={mt} $ml={ml} width="9" height="3" viewBox="0 0 9 3"><rect width="9" height="3" fill="#999" /></PlusMinus>;
}

function App() {
  return (
    <Page>
      <GlobalStyle />
      <TitleBar>
        <svg width="17" height="17" viewBox="0 0 17 17">
          <path d="M8.5 1C4 1 1 4 1 8C1 12 4 15 8 16C11 13 13 10 12 7C11 6 9 6 8 7C9 4 12 3 15 4C13 2 11 1 8.5 1z" fill="#3f9a4a" />
          <path d="M15 4C16.5 8 14 14 8 16C12 12 13 9 12 7C13 6 14 5 15 4z" fill="#c0492f" />
          <path d="M4 3C7 1 11 1 14 3C11 2.5 8 3 6 5z" fill="#2d7fc0" />
        </svg>
        <TitleText>CrownHim - REAPER v6.12c/x64 - EVALUATION LICENSE</TitleText>
        <WinButtons>
          <WinButton>
            <svg width="10" height="1"><rect width="10" height="1" fill="#111" /></svg>
          </WinButton>
          <WinButton>
            <svg width="10" height="10" viewBox="0 0 10 10"><path d="M0.5 2.5H7.5V9.5H0.5zM2.5 2.5V0.5H9.5V7.5H7.5" fill="none" stroke="#111" /></svg>
          </WinButton>
          <WinButton>
            <svg width="11" height="11" viewBox="0 0 11 11"><path d="M0.5 0.5L10.5 10.5M10.5 0.5L0.5 10.5" stroke="#111" /></svg>
          </WinButton>
        </WinButtons>
      </TitleBar>
      <MenuBar>
        {MENUS.map(m => <span key={m}>{m}</span>)}
        <AudioInfo>[44.1kHz 24bit WAV : 2/2ch 1024spls ~43/187ms WaveOut]</AudioInfo>
      </MenuBar>

      <Upper>
        <LeftCol>
          <Toolbar>
            <ToolRow $mb={2}>
              <ToolCell $w={28}><ToolIcon kind="doc" /></ToolCell>
              <ToolCell><ToolIcon kind="open" /></ToolCell>
              <ToolCell><ToolIcon kind="save" /></ToolCell>
              <ToolCell><ToolIcon kind="info" /></ToolCell>
              <ToolCell><ToolIcon kind="undo" /></ToolCell>
              <ToolCell><ToolIcon kind="redo" /></ToolCell>
              <ToolCell><ToolIcon kind="road" /></ToolCell>
            </ToolRow>
            <ToolRow>
              <ToggleCell $on><ToolIcon kind="xfade" /></ToggleCell>
              <ToggleCell $on><ToolIcon kind="link" /></ToggleCell>
              <ToggleCell><ToolIcon kind="grid" /></ToggleCell>
              <ToggleCell $on><ToolIcon kind="env" /></ToggleCell>
              <ToggleCell $on><ToolIcon kind="snap" /></ToggleCell>
              <ToggleCell $on><ToolIcon kind="loop" /></ToggleCell>
              <ToolCell><ToolIcon kind="lock" /></ToolCell>
            </ToolRow>
          </Toolbar>
          {TRACKS.map(t => {
            const Icon = ICONS[t.icon];
            return (
              <TcpRow key={t.n}>
                <TrackNum $color={t.color} $text={t.num}>
                  {t.n}
                  <FolderIcon c="rgba(0,0,0,0.22)" />
                </TrackNum>
                <TrackPanel $color={t.color}>
                  <TrackPill>
                    <RecButton />
                    <TrackName $color={t.label}>{t.name}</TrackName>
                    <Knob />
                  </TrackPill>
                </TrackPanel>
                <TcpRight>
                  <MsGroup>
                    <MsButton>M</MsButton>
                    <MsButton $s>S</MsButton>
                  </MsGroup>
                  <InstrumentBox><Icon /></InstrumentBox>
                </TcpRight>
              </TcpRow>
            );
          })}
          <StatusLine>Drums [items] 1</StatusLine>
        </LeftCol>

        <RightCol>
          <MarkerStrip />
          <Ruler>
            {RULER.map(([bar, time]) => (
              <RulerCell key={bar}>
                <RulerBar>{bar}</RulerBar>
                <RulerTime>{time}</RulerTime>
              </RulerCell>
            ))}
          </Ruler>
          <ArrangeRow>
            <Lanes />
            <VScroll>
              <CircleArrow dir="up" />
              <VThumb />
              <CircleArrow dir="down" />
              <Plus mt={6} />
              <Minus mt={15} />
            </VScroll>
          </ArrangeRow>
          <HScroll>
            <CircleArrow dir="left" />
            <HThumb />
            <CircleArrow dir="right" />
            <Plus ml={6} />
            <Minus ml={12} />
          </HScroll>
        </RightCol>
      </Upper>
      <PlayFlag />

      <Transport>
        <PillGroup>
          <PillPart>
            <svg width="11" height="11" viewBox="0 0 11 11"><path d="M0 0H2V11H0zM11 0V11L3 5.5z" fill="#8a8a8a" /></svg>
          </PillPart>
          <PillPart $line>
            <svg width="11" height="11" viewBox="0 0 11 11"><path d="M9 0H11V11H9zM0 0V11L8 5.5z" fill="#8a8a8a" /></svg>
          </PillPart>
        </PillGroup>
        <BigRec $size={30} />
        <PlayBall>
          <svg width="13" height="14" viewBox="0 0 13 14"><path d="M1 0L13 7L1 14z" fill="#444" /></svg>
        </PlayBall>
        <LoopBall>
          <svg width="13" height="13" viewBox="0 0 13 13">
            <path d="M2 6.5A4.5 4.5 0 0 1 10 3.5M11 6.5A4.5 4.5 0 0 1 3 9.5" fill="none" stroke="#8a8a8a" strokeWidth="2" />
          </svg>
        </LoopBall>
        <PillGroup>
          <PillPart>
            <svg width="10" height="10"><rect width="10" height="10" fill="#8a8a8a" /></svg>
          </PillPart>
          <PillPart $line>
            <svg width="10" height="10" viewBox="0 0 10 10"><path d="M0 0H3.5V10H0zM6.5 0H10V10H6.5z" fill="#8a8a8a" /></svg>
          </PillPart>
        </PillGroup>
        <TimeText>1.1.00 / 0:00.000</TimeText>
        <StoppedText>[Stopped]</StoppedText>
        <SelCell $w={78}>Selection:</SelCell>
        <SelCell $w={80}>1.1.00</SelCell>
        <SelCell $w={79}>1.1.00</SelCell>
        <SelCell $w={59}>0.0.00</SelCell>
        <InfoBox $w={50} $gap={5}><span>BPM</span><span>120</span></InfoBox>
        <InfoBox $w={38}><span>4/4</span></InfoBox>
        <InfoBox $w={54} $gap={3}>
          <GlobalLine>
            <svg width="13" height="8" viewBox="0 0 13 8"><path d="M0 7L3 7L7 1L12 7" fill="none" stroke="#777" strokeWidth="1.5" /></svg>
            GLOBAL
          </GlobalLine>
          <NoneLine>
            none
            <svg width="10" height="10" viewBox="0 0 10 10">
              <circle cx="5" cy="5" r="5" fill="#9a9a9a" />
              <path d="M2 3H8L5 8z" fill="#333" />
            </svg>
          </NoneLine>
        </InfoBox>
        <RateKnob />
        <RateBox><span>Rate:</span><span>1.0</span></RateBox>
      </Transport>

      <Mixer>
        <MasterStrip />
        {TRACKS.map(t => <Strip key={t.n} t={t} />)}
      </Mixer>

      <TabBar>
        !
        <MixerTab>
          <svg width="10" height="10" viewBox="0 0 10 10">
            <path d="M0.5 0.5H9.5V9.5H0.5zM2.5 2.5L7.5 7.5M7.5 2.5L2.5 7.5" fill="none" stroke="#111" />
          </svg>
          Mixer
        </MixerTab>
      </TabBar>
    </Page>
  );
}

export default App;
